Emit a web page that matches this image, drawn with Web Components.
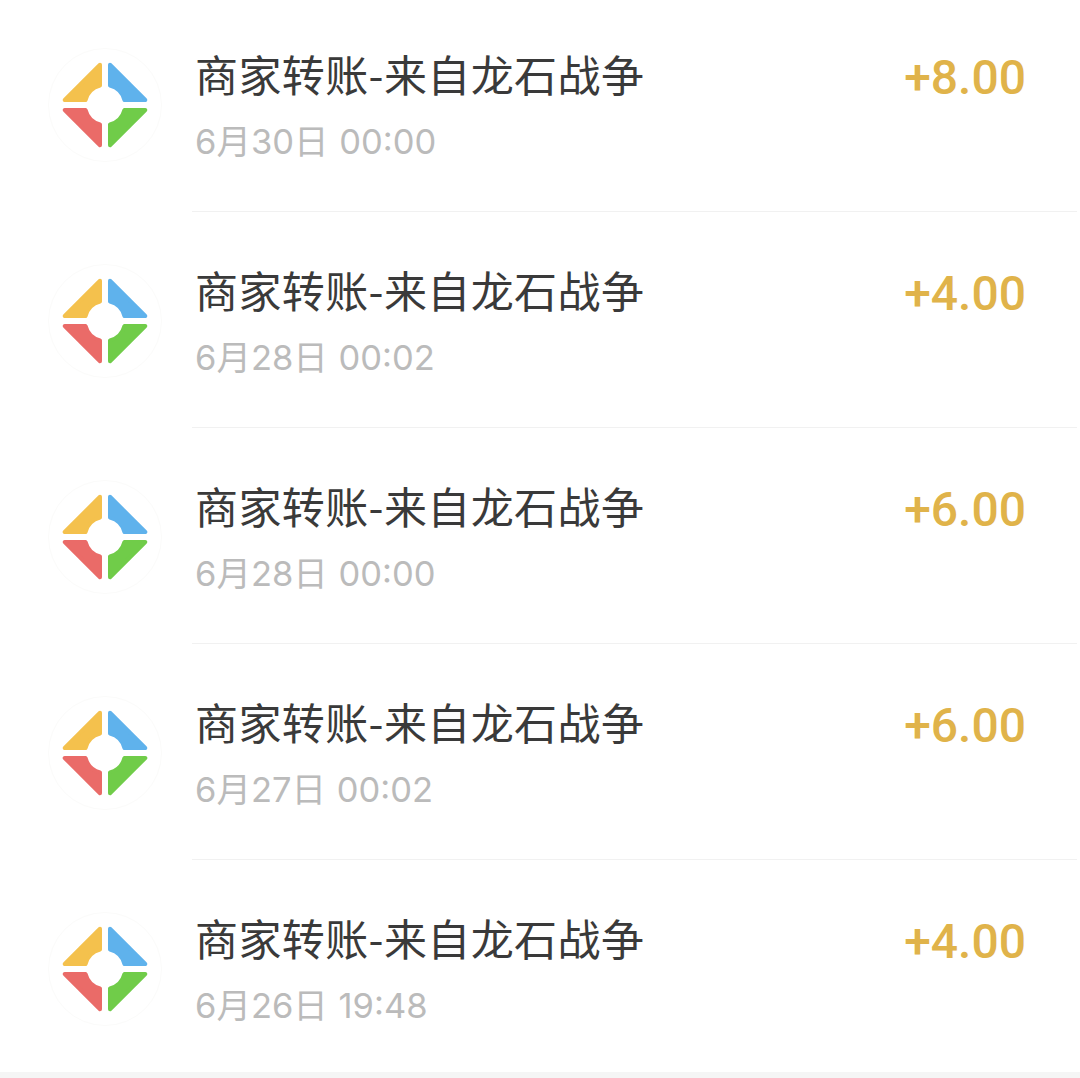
<!DOCTYPE html>
<html lang="zh"><head><meta charset="utf-8"><style>
html,body{margin:0;padding:0;background:#fff;overflow:hidden;height:1078px}
body{font-family:"Noto Sans CJK SC","Noto Sans",sans-serif}
</style></head><body>
<tx-list>
<tx-row heading="商家转账-来自龙石战争" date="6月30日 00:00" amount="+8.00"></tx-row>
<tx-row heading="商家转账-来自龙石战争" date="6月28日 00:02" amount="+4.00"></tx-row>
<tx-row heading="商家转账-来自龙石战争" date="6月28日 00:00" amount="+6.00"></tx-row>
<tx-row heading="商家转账-来自龙石战争" date="6月27日 00:02" amount="+6.00"></tx-row>
<tx-row heading="商家转账-来自龙石战争" date="6月26日 19:48" amount="+4.00" last></tx-row>
</tx-list>
<script>
class TxLogo extends HTMLElement{
  constructor(){super();this.attachShadow({mode:'open'}).innerHTML=`<style>:host{display:block;width:114px;height:114px;flex:none}svg{display:block}</style>
  <svg width="114" height="114" viewBox="-57 -57 114 114">
    <circle r="56.5" fill="#fff" stroke="#fbfbfa" stroke-width="1"/>
    <g stroke-linejoin="round" stroke-width="4">
      <path fill="#f4c14d" stroke="#f4c14d" d="M-5 -40.3 L-40.3 -5 L-19.4 -5 A20 20 0 0 1 -5 -19.4 Z"/>
      <path fill="#5fb2ec" stroke="#5fb2ec" d="M5 -40.3 L40.3 -5 L19.4 -5 A20 20 0 0 0 5 -19.4 Z"/>
      <path fill="#ea6b68" stroke="#ea6b68" d="M-5 40.3 L-40.3 5 L-19.4 5 A20 20 0 0 0 -5 19.4 Z"/>
      <path fill="#70cc49" stroke="#70cc49" d="M5 40.3 L40.3 5 L19.4 5 A20 20 0 0 1 5 19.4 Z"/>
    </g>
  </svg>`}
}
customElements.define('tx-logo',TxLogo);
class TxList extends HTMLElement{
  constructor(){super();this.attachShadow({mode:'open'}).innerHTML=`<style>:host{display:block;margin-top:-4px;background:#fff}
  .strip{height:6px;background:#f5f5f5}</style><slot></slot><div class="strip"></div>`}
}
customElements.define('tx-list',TxList);
class TxRow extends HTMLElement{
  constructor(){super();const r=this.attachShadow({mode:'open'});
  r.innerHTML=`<style>
  :host{display:flex;height:216px;padding-left:48px;box-sizing:border-box;align-items:flex-start}
  :host([last]){height:212px}
  tx-logo{margin-top:52px}
  .body{flex:1;height:100%;box-sizing:border-box;margin:0 3px 0 30px;padding:0 51px 0 3px;border-bottom:1px solid #f1f1f1;display:flex;justify-content:space-between;align-items:flex-start}
  :host([last]) .body{border-bottom-color:transparent}
  .t{font:400 43px/50px "Noto Sans CJK SC",sans-serif;letter-spacing:.4px;color:#3a3a3a;margin-top:52px;white-space:nowrap}
  .d{font:400 34.5px/42px Inter,"Noto Sans CJK SC",sans-serif;word-spacing:1px;color:#bbbbbb;margin-top:23px;white-space:nowrap}
  .a{font:500 48px/54px Roboto,sans-serif;color:#e0b34a;margin-top:55px;white-space:nowrap}
  </style><tx-logo></tx-logo><div class="body"><div><div class="t"></div><div class="d"></div></div><div class="a"></div></div>`;}
  connectedCallback(){const s=this.shadowRoot;s.querySelector('.t').textContent=this.getAttribute('heading');s.querySelector('.d').textContent=this.getAttribute('date');s.querySelector('.a').textContent=this.getAttribute('amount')}
}
customElements.define('tx-row',TxRow);
</script></body></html>
